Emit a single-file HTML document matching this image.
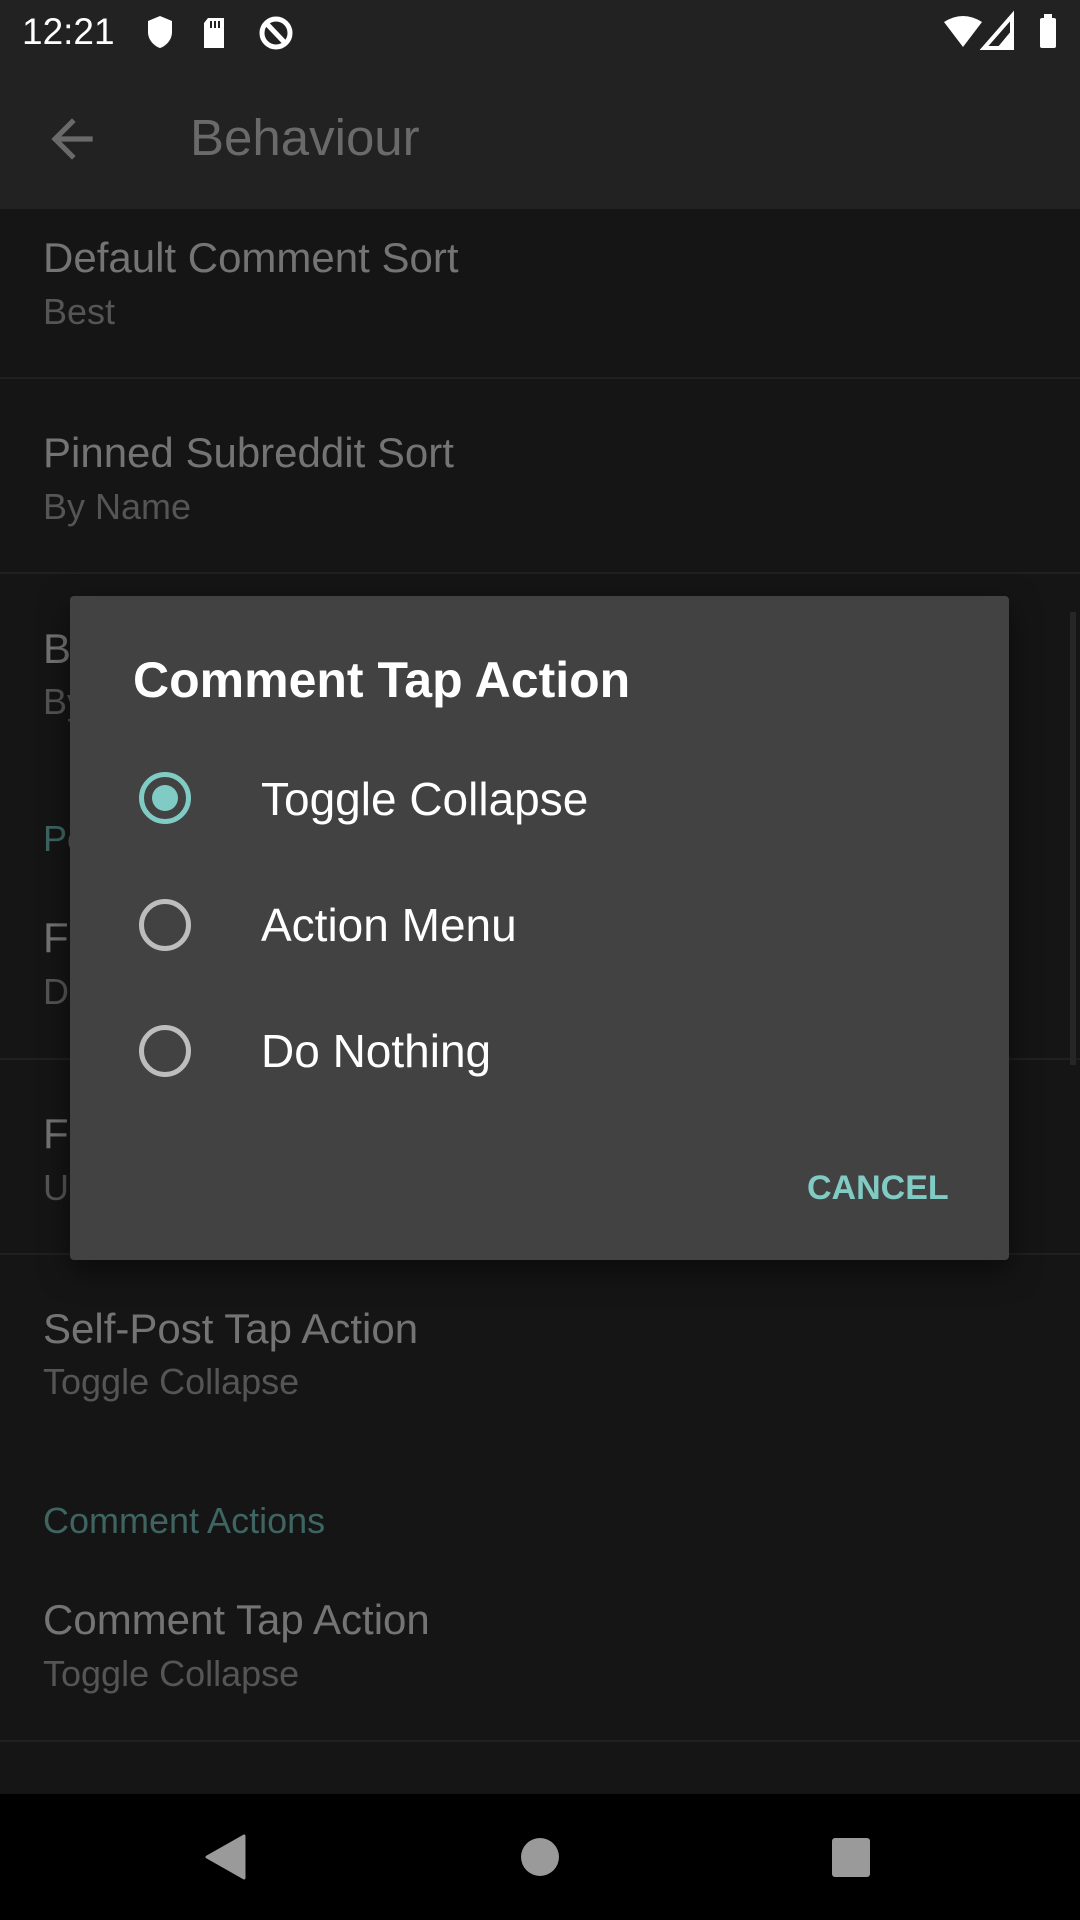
<!DOCTYPE html>
<html><head><meta charset="utf-8"><style>
*{margin:0;padding:0;box-sizing:border-box}
body{width:1080px;height:1920px;background:#151515;position:relative;overflow:hidden;font-family:"Liberation Sans",Roboto,sans-serif}
.abs{position:absolute}
.t{position:absolute;left:43px;font-size:42px;color:#747474;line-height:1;transform:translateY(-50%)}
.s{position:absolute;left:43px;font-size:36px;color:#555;line-height:1;transform:translateY(-50%)}
.sec{position:absolute;left:43px;font-size:36px;color:#3e6562;line-height:1;transform:translateY(-50%)}
.div{position:absolute;left:0;width:1080px;height:2px;background:#202020}
.radio{position:absolute;left:139px;width:52px;height:52px;border-radius:50%;border:5px solid #bdbdbd}
.opt{position:absolute;left:261px;font-size:46px;color:#fff;line-height:1;transform:translateY(-50%)}
</style></head><body>
<div class="abs" style="left:0;top:0;width:1080px;height:209px;background:#222"></div>
<div class="abs" style="left:22px;top:10px;font-size:37px;color:#fff;line-height:44px">12:21</div>
<svg class="abs" style="left:140px;top:10px" width="180" height="44" viewBox="0 0 180 44">
<path d="M20 6 L32 11 V22 C32 30 26 36 20 38 C14 36 8 30 8 22 V11 Z" fill="#fff"/>
<path d="M68 8 H84 V38 H64 V13 Z" fill="#fff"/><rect x="70" y="11" width="2" height="7" fill="#222"/><rect x="74" y="11" width="2" height="7" fill="#222"/><rect x="78" y="11" width="2" height="7" fill="#222"/>
<circle cx="136" cy="23" r="14" fill="none" stroke="#fff" stroke-width="5"/><path d="M127 14 L146 34" stroke="#fff" stroke-width="5"/>
</svg>
<svg class="abs" style="left:940px;top:10px" width="130" height="44" viewBox="0 0 130 44">
<path d="M4 12 Q23 0 42 12 L23 37 Z" fill="#fff"/>
<path d="M72 6 V38 H44 Z" fill="none" stroke="#fff" stroke-width="4"/><path d="M72 20 V38 H57 Z" fill="#fff"/>
<rect x="100" y="8" width="16" height="30" rx="2" fill="#fff"/><rect x="104" y="4" width="8" height="5" fill="#fff"/>
</svg>
<svg class="abs" style="left:41px;top:108px" width="62" height="62" viewBox="0 0 24 24"><path d="M20 11H7.83l5.59-5.59L12 4l-8 8 8 8 1.41-1.41L7.83 13H20v-2z" fill="#6a6a6a"/></svg>
<div class="abs" style="left:190px;top:112px;font-size:51px;color:#6a6a6a;line-height:52px">Behaviour</div>

<div class="t" style="top:258px">Default Comment Sort</div>
<div class="s" style="top:312px">Best</div>
<div class="div" style="top:377px"></div>
<div class="t" style="top:453px">Pinned Subreddit Sort</div>
<div class="s" style="top:507px">By Name</div>
<div class="div" style="top:572px"></div>
<div class="t" style="top:649px">Browse</div>
<div class="s" style="top:702px">By</div>
<div class="sec" style="top:839px">Post</div>
<div class="t" style="top:938px">Fling</div>
<div class="s" style="top:992px">Default</div>
<div class="div" style="top:1058px"></div>
<div class="t" style="top:1134px">Fling</div>
<div class="s" style="top:1188px">Upvote</div>
<div class="div" style="top:1253px"></div>
<div class="t" style="top:1329px">Self-Post Tap Action</div>
<div class="s" style="top:1382px">Toggle Collapse</div>
<div class="sec" style="top:1521px">Comment Actions</div>
<div class="t" style="top:1620px">Comment Tap Action</div>
<div class="s" style="top:1674px">Toggle Collapse</div>
<div class="div" style="top:1740px"></div>
<div class="abs" style="left:1070px;top:612px;width:6px;height:453px;background:#262626"></div>

<div class="abs" style="left:70px;top:596px;width:939px;height:664px;background:#424242;border-radius:4px;box-shadow:0 10px 30px rgba(0,0,0,.5)"></div>
<div class="abs" style="left:133px;top:680px;font-size:50px;font-weight:bold;color:#fff;line-height:1;transform:translateY(-50%)">Comment Tap Action</div>
<div class="radio" style="top:772px;border-color:#80cbc4"><div style="position:absolute;left:8px;top:8px;width:26px;height:26px;border-radius:50%;background:#80cbc4"></div></div>
<div class="opt" style="top:799px">Toggle Collapse</div>
<div class="radio" style="top:899px"></div>
<div class="opt" style="top:925px">Action Menu</div>
<div class="radio" style="top:1025px"></div>
<div class="opt" style="top:1051px">Do Nothing</div>
<div class="abs" style="left:807px;top:1188px;font-size:34px;font-weight:bold;color:#80cbc4;line-height:1;transform:translateY(-50%)">CANCEL</div>

<div class="abs" style="left:0;top:1794px;width:1080px;height:126px;background:#000"></div>
<svg class="abs" style="left:0;top:1794px" width="1080" height="126" viewBox="0 0 1080 126">
<path d="M244 42 V84 L207 63 Z" fill="#9a9a9a" stroke="#9a9a9a" stroke-width="3" stroke-linejoin="round"/>
<circle cx="540" cy="63" r="19" fill="#9a9a9a"/>
<rect x="832" y="44" width="38" height="39" rx="3" fill="#9a9a9a"/>
</svg>
</body></html>
